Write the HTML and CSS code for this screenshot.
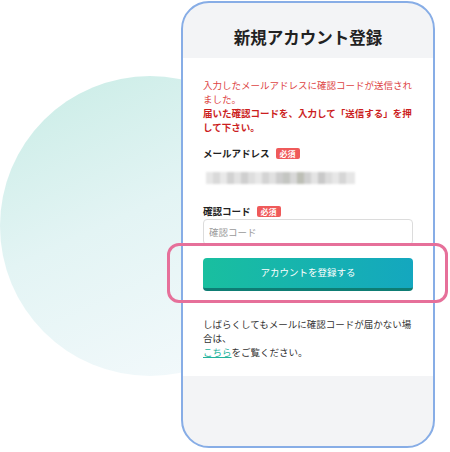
FILE: index.html
```html
<!DOCTYPE html>
<html lang="ja">
<head>
    <meta charset="utf-8">
    <link rel="stylesheet" href="styles.css">
</head>
<body>
    <div class="stage">
        <div class="circle"></div>
        <div class="phone">
            <div class="phone-head">
                <h2>新規アカウント登録</h2>
            </div>
            <div class="phone-body">
                <p class="notice">入力したメールアドレスに確認コードが送信され<br>ました。<br><strong>届いた確認コードを、入力して「送信する」を押<br>して下さい。</strong></p>
                <div class="label">メールアドレス <span class="badge">必須</span></div>
                <div class="masked"></div>
                <div class="label label-code">確認コード <span class="badge">必須</span></div>
                <input type="text" class="field" placeholder="確認コード">
                <button type="button" class="btn">アカウントを登録する</button>
                <p class="help">しばらくしてもメールに確認コードが届かない場<br>合は、<br><a href="#">こちら</a>をご覧ください。</p>
            </div>
            <div class="phone-foot"></div>
        </div>
        <div class="highlight"></div>
    </div>
</body>
</html>
```

FILE: styles.css
```css
body {
    margin: 0;
    padding: 0;
    background-color: #fff;
    font-family: "Noto Sans CJK JP", "Noto Sans", sans-serif;
}
.stage {
    position: relative;
    width: 450px;
    height: 452px;
    overflow: hidden;
    padding: 1px 0 0 181px;
    box-sizing: border-box;
}
.circle {
    position: absolute;
    left: 0;
    top: 76px;
    width: 300px;
    height: 300px;
    border-radius: 50%;
    background: linear-gradient(155deg, #c8ece5 0%, #e3f4f4 45%, #f6fafd 100%);
}
.phone {
    position: relative;
    width: 254px;
    height: 447px;
    box-sizing: border-box;
    border: 2px solid #87ade6;
    border-radius: 28px;
    background-color: #f3f4f6;
    overflow: hidden;
    display: flex;
    flex-direction: column;
}
.phone-head {
    height: 55px;
    box-sizing: border-box;
    padding-top: 22px;
}
.phone-head h2 {
    margin: 0;
    text-align: center;
    font-size: 16.5px;
    line-height: 25px;
    font-weight: 700;
    color: #222;
}
.phone-body {
    background-color: #fff;
    padding: 20px 20px 17px;
    display: flex;
    flex-direction: column;
}
.phone-foot {
    flex: 1;
}
.notice {
    margin: 0;
    font-size: 9.5px;
    line-height: 14px;
    color: #dd4444;
    white-space: nowrap;
}
.notice strong {
    color: #cc1f1f;
}
.label {
    margin-top: 11px;
    font-size: 9.5px;
    line-height: 16px;
    font-weight: 700;
    color: #222;
    display: flex;
    align-items: center;
    gap: 6px;
}
.label-code {
    margin-top: 19px;
}
.badge {
    display: inline-block;
    padding: 0 4px;
    height: 11px;
    line-height: 11px;
    font-size: 8px;
    color: #fff;
    background-color: #ef5a5a;
    border-radius: 2px;
}
.masked {
    margin: 11px 0 0 3px;
    width: 149px;
    height: 12px;
    filter: blur(0.9px);
    background: linear-gradient(90deg,
        #e6e6e6 0 7px, #d9d9d9 7px 14px, #e9e9e9 14px 21px, #d2d2d2 21px 28px,
        #e2e2e2 28px 35px, #cfcfcf 35px 42px, #dedede 42px 49px, #e8e8e8 49px 56px,
        #d4d4d4 56px 63px, #e1e1e1 63px 70px, #cdcdcd 70px 77px, #c4c6c2 77px 84px,
        #d8d8d8 84px 91px, #bdbfb6 91px 98px, #d0d0d0 98px 105px, #e4e4e4 105px 112px,
        #c9c9c9 112px 119px, #dcdcdc 119px 126px, #e7e7e7 126px 133px, #d6d6d6 133px 140px,
        #e6e6e6 140px 149px);
}
.field {
    display: block;
    height: 26px;
    width: 100%;
    box-sizing: border-box;
    margin: 0;
    padding: 0 5px;
    border: 1px solid #dcdcdc;
    border-radius: 4px;
    font-family: inherit;
    font-size: 9.5px;
    color: #333;
}
.field::placeholder {
    color: #9a9a9a;
}
.btn {
    margin-top: 13px;
    height: 33px;
    width: 100%;
    padding: 0 0 3px;
    border: none;
    border-bottom: 3px solid #0e7d74;
    border-radius: 4px;
    background: linear-gradient(90deg, #19bf9f, #14a7bf);
    color: #fff;
    font-family: inherit;
    font-size: 9.5px;
    cursor: pointer;
}
.help {
    margin: 26px 0 0;
    font-size: 9.5px;
    line-height: 14px;
    color: #333;
    white-space: nowrap;
}
.help a {
    color: #24b39c;
}
.highlight {
    position: absolute;
    left: 167px;
    top: 243px;
    width: 281px;
    height: 60px;
    box-sizing: border-box;
    border: 3px solid #e6709a;
    border-radius: 12px;
}
```
